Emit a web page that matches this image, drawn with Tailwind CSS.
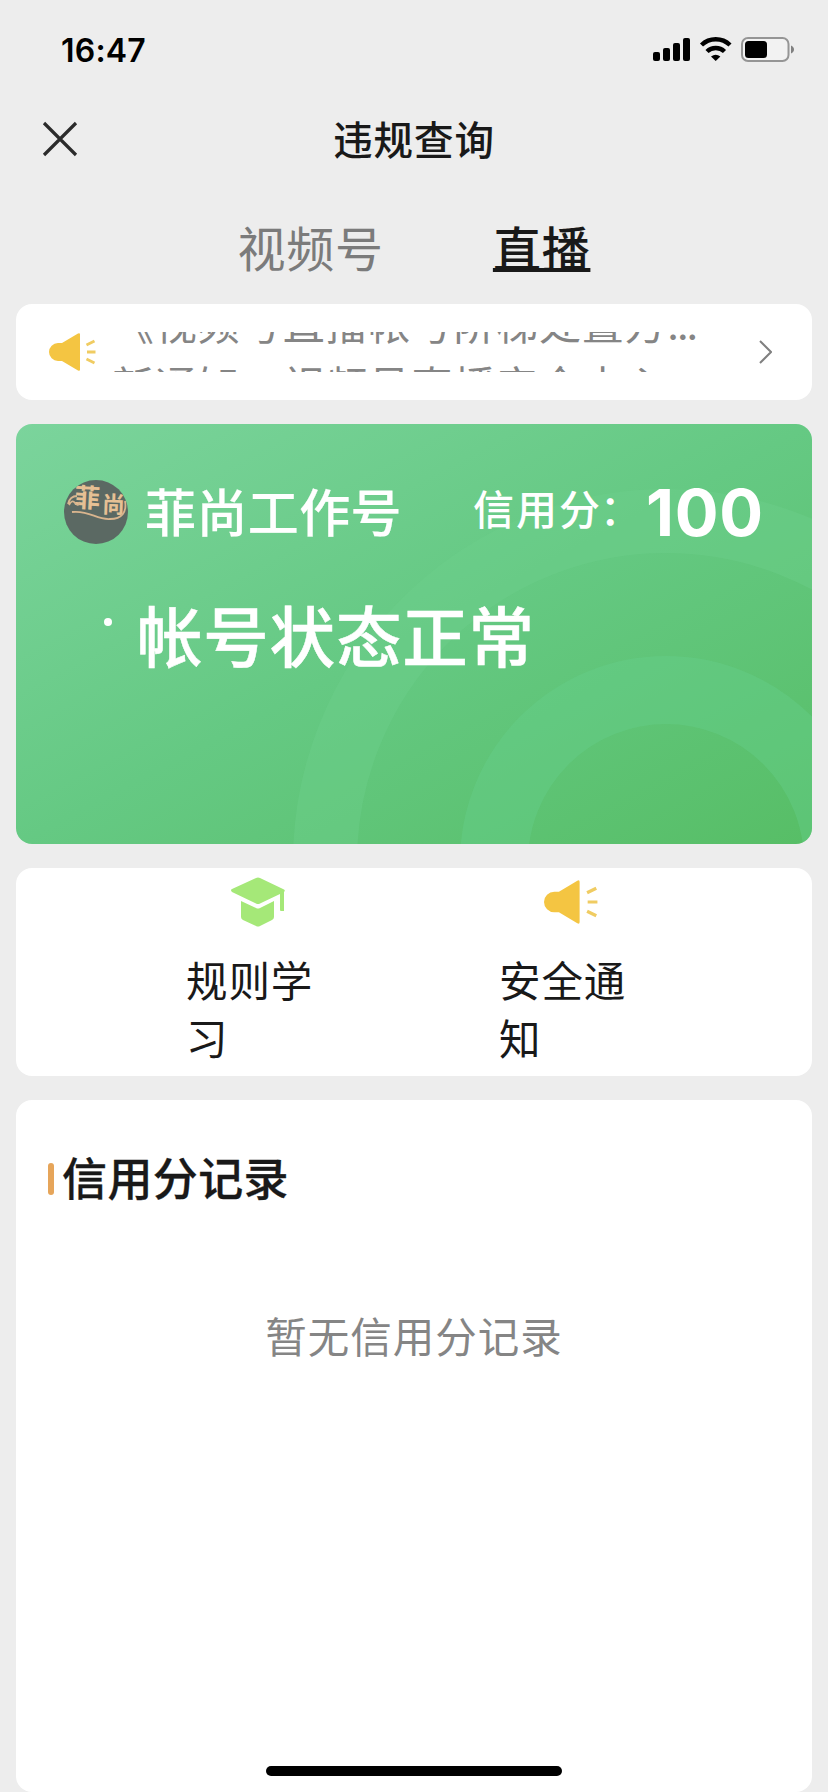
<!DOCTYPE html>
<html lang="zh-CN">
<head>
<meta charset="utf-8">
<title>违规查询</title>
<script src="https://cdn.jsdelivr.net/npm/@tailwindcss/browser@4"></script>
</head>
<body class="w-[828px] h-[1792px] overflow-hidden bg-[#ededed] font-['Inter','Noto_Sans_CJK_SC',sans-serif] text-[#191919]">
<div class="relative flex h-full flex-col">
  <header class="flex h-[88px] shrink-0 items-start justify-between pl-[61px] pr-[34px] pt-[29px]">
    <div class="text-[32px] leading-[43px] font-semibold tracking-[0.2px] text-black">16:47</div>
    <svg class="mt-[6px]" width="142" height="30" viewBox="652 35 142 30" fill="none">
      <g fill="#000"><rect x="653" y="52" width="7" height="9" rx="2"/><rect x="663" y="48" width="7" height="13" rx="2"/><rect x="673" y="43" width="7" height="18" rx="2"/><rect x="683" y="38" width="7" height="23" rx="2"/></g>
      <path d="M701.500 45a20.500 20.500 0 0 1 28.500 0" stroke="#000" stroke-width="4.400"/>
      <path d="M707 51.500a12.500 12.500 0 0 1 17.500 0" stroke="#000" stroke-width="4.400"/>
      <path d="M711 56.500q4.700-3.600 9.400 0l-4.700 4.600z" fill="#000"/>
      <rect x="742" y="38" width="46.500" height="23" rx="6" stroke="#959595" stroke-width="2" fill="#f2f2f2"/>
      <rect x="745" y="41" width="22" height="17" rx="3.500" fill="#000"/>
      <path d="M791 45.500c4 1.500 4 6.500 0 8z" fill="#808080"/>
    </svg>
  </header>
  <nav class="grid h-[104px] shrink-0 grid-cols-[1fr_auto_1fr] items-center px-[42px]">
    <svg class="-mt-[2px]" width="36" height="36" viewBox="0 0 36 36" stroke="#2b2b2b" stroke-width="3.200"><path d="M2 2l32 32M34 2L2 34"/></svg>
    <h1 class="mt-px text-[39.5px] tracking-[0.9px] leading-[56px] font-medium">违规查询</h1>
  </nav>
  <div class="flex h-[112px] shrink-0 justify-center gap-[109px] pt-[23px] text-[48px] leading-[70px] tracking-[0.75px]">
    <span class="text-[#7b7b7b]">视频号</span>
    <span class="font-medium underline decoration-[4px] underline-offset-[1px] [text-decoration-skip-ink:none]">直播</span>
  </div>
  <main class="flex flex-1 flex-col gap-6 px-4">
    <section class="flex h-24 shrink-0 items-center rounded-2xl bg-white pl-[33px] pr-[40px]">
      <svg width="47" height="38" viewBox="0 0 47 38"><path d="M0 19a9 9 0 0 1 9-9h4L29 .5q2-1 2 1v35q0 2-2 1L13 28H9a9 9 0 0 1-9-9z" fill="#f4c542"/><path d="M37.500 12l8-4M38 19h8.500M37.500 26l8 4" stroke="#f0cc62" stroke-width="2.800"/></svg>
      <div class="ml-[16px] h-10 w-[610px] overflow-hidden text-[42px] leading-[60px] tracking-[0.7px] whitespace-nowrap text-[#858585]">
        <div class="-mt-[37px]">《视频号直播帐号阶梯处置方<span class="tracking-[-2.5px]">...</span></div>
        <div class="mt-[2px]">新通知，视频号直播安全中心</div>
      </div>
      <svg class="ml-auto" width="13" height="24" viewBox="0 0 13 24" fill="none" stroke="#808080" stroke-width="2"><path d="M1 1l11 11L1 23"/></svg>
    </section>
    <section class="relative h-[420px] shrink-0 overflow-hidden rounded-2xl bg-linear-to-br from-[#7bd49c] via-[#65c983] to-[#57be66] text-white">
      <svg class="absolute inset-0" width="796" height="420" viewBox="16 424 796 420" fill="none"><circle cx="666" cy="862" r="341" stroke="#6ed08b" stroke-opacity=".4" stroke-width="64"/><circle cx="666" cy="862" r="172" stroke="#66d08b" stroke-opacity=".4" stroke-width="68"/></svg>
      <div class="relative flex h-16 items-center mt-14 pl-12 pr-[49px]">
        <svg width="64" height="64" viewBox="0 0 64 64"><defs><clipPath id="a"><circle cx="32" cy="32" r="32"/></clipPath></defs><g clip-path="url(#a)"><path fill="#5b6963" d="M0 0h64v64H0z"/><g fill="#e6c094" font-family="Noto Sans CJK SC" font-weight="700"><text x="10" y="27" font-size="26" transform="rotate(3 20 20)">菲</text><text x="38" y="33" font-size="23" transform="rotate(2 50 26)">尚</text></g><path d="M4 24q2-8 9-8M5 25q3-6 6-2t5-1M8 32c18-2 24 8 38 7 12 0 17-7 15-18" stroke="#d9b58e" stroke-width="1.800" fill="none"/></g></svg>
        <span class="ml-[17px] mt-[4px] text-[51px] leading-[64px] tracking-[0.4px] font-medium [-webkit-text-stroke:0.2px]">菲尚工作号</span>
        <span class="ml-auto mr-[3px] -mt-[3px] text-[41px] tracking-[2px] font-medium">信用分<span class="-ml-[2px]">：</span></span>
        <span class="mt-[2px] text-[65px] leading-[64px] font-bold tracking-[0.8px] -mr-px">100</span>
      </div>
      <div class="relative mt-[40px] flex pl-[88px]">
        <span class="mt-[34px] h-2 w-2 rounded-full bg-white"></span>
        <span class="mt-[9px] ml-[25px] text-[65.5px] leading-[92px] tracking-[0.8px] font-medium [-webkit-text-stroke:0.5px]">帐号状态正常</span>
      </div>
    </section>
    <section class="flex h-[208px] shrink-0 rounded-2xl bg-white pl-[170px] text-[41.5px] leading-[58px] tracking-[0.900px]">
      <div class="flex w-[313px] flex-col">
        <svg class="ml-[44px] mt-[9px]" width="56" height="50" viewBox="0 0 56 50" fill="#a5e878"><path d="M2 12Q0 13 2 15L26 26.500q2 1 4 0L50 17v16q0 1 1 1h3V15Q56 13 53 12L30 1q-2-1-4 0z"/><path d="M11 24l15 7q2 1 4 0l14-7v16q0 2-2 3l-12 6q-2 1-4 0l-13-6q-2-1-2-3z"/></svg>
        <span class="mt-[26px] w-[130px]">规则学习</span>
      </div>
      <div class="flex flex-col">
        <svg class="ml-[45px] mt-[12px]" width="54" height="44" viewBox="0 0 47 38"><path d="M0 19a9 9 0 0 1 9-9h4L29 .5q2-1 2 1v35q0 2-2 1L13 28H9a9 9 0 0 1-9-9z" fill="#f4c542"/><path d="M37.500 11l8-4M38 19h8.500M37.500 27l8 4" stroke="#f0cc62" stroke-width="2.800"/></svg>
        <span class="mt-[29px] w-[130px]">安全通知</span>
      </div>
    </section>
    <section class="h-[692px] shrink-0 rounded-2xl bg-white px-8 pt-[48px]">
      <div class="flex items-center gap-[8px]">
        <i class="-mt-[2px] h-8 w-[6px] rounded-full bg-[#e6a55a]"></i>
        <h2 class="text-[45px] leading-[64px] tracking-[0.4px] font-medium [-webkit-text-stroke:0.3px]">信用分记录</h2>
      </div>
      <p class="mt-[96px] text-center text-[41.5px] leading-[60px] tracking-[1px] text-[#858585]">暂无信用分记录</p>
    </section>
  </main>
  <div class="absolute left-[266px] top-[1766px] h-[10px] w-[296px] rounded-full bg-black"></div>
</div>
</body>
</html>
